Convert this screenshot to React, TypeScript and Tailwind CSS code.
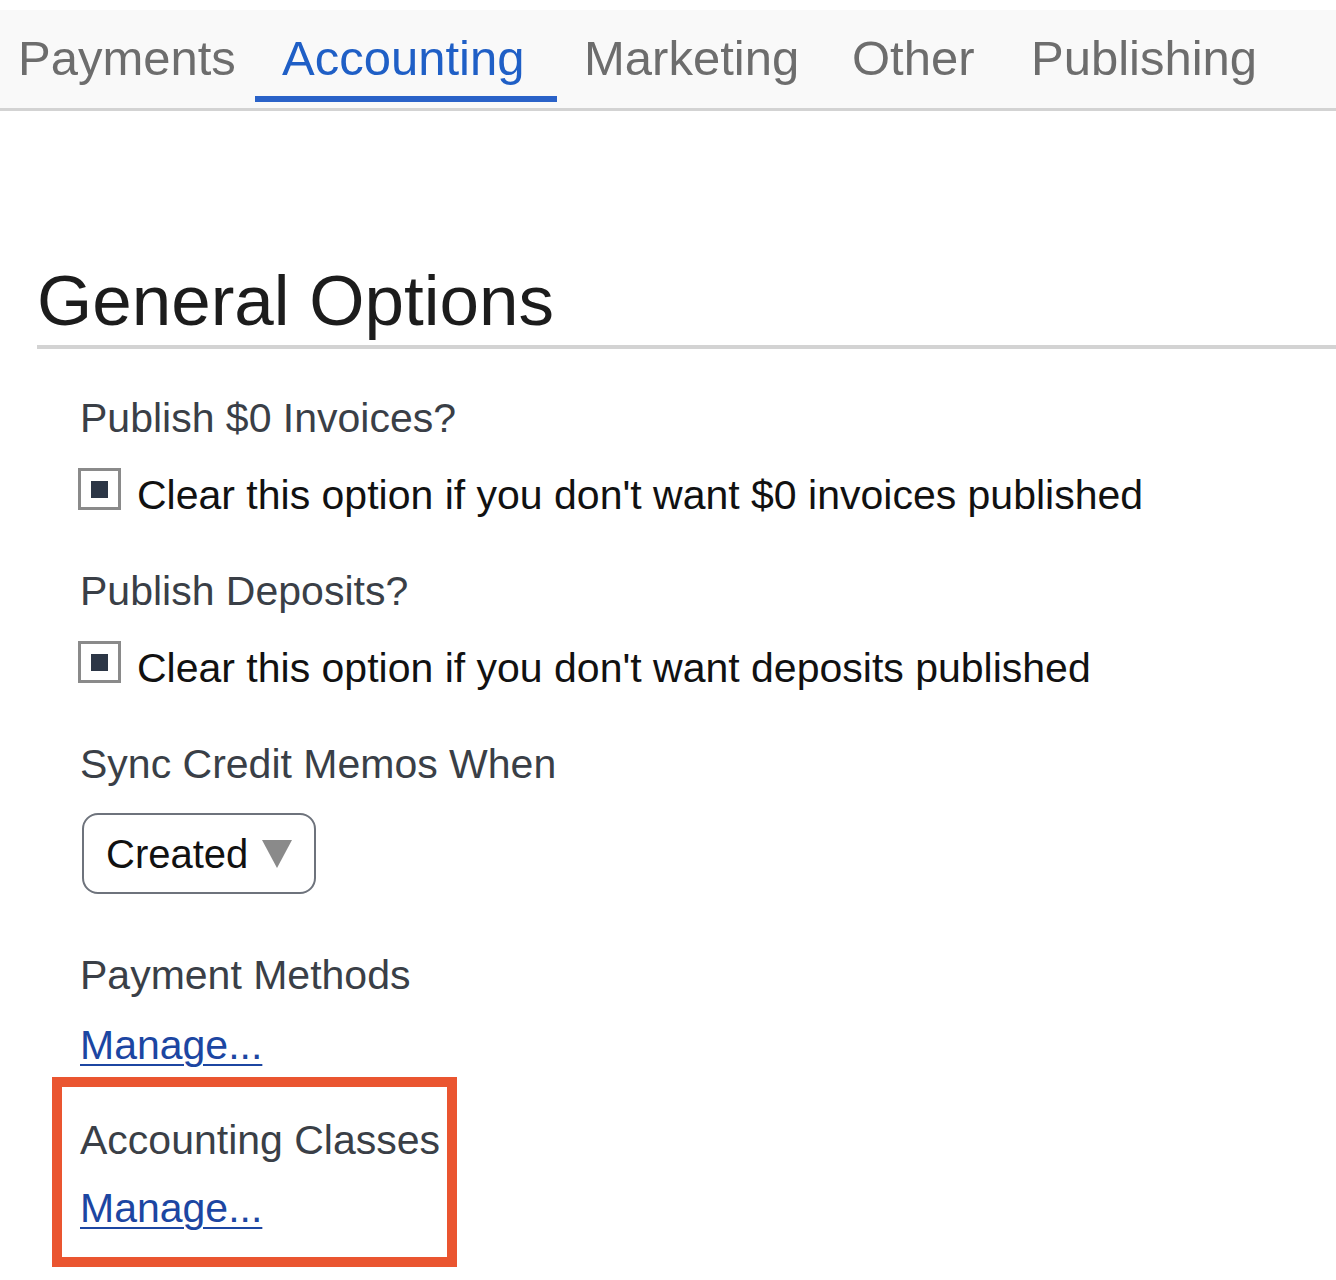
import { useState } from "react"

const tabs = [
    { name: "Payments", cls: "w-[255px] pl-[18px]" },
    { name: "Accounting", cls: "w-[302px] pl-[27px]" },
    { name: "Marketing", cls: "w-[268px] pl-[27px]" },
    { name: "Other", cls: "w-[179px] pl-[27px]" },
    { name: "Publishing", cls: "w-[260px] pl-[27px]" },
]

function Checkbox({ checked, onToggle }: { checked: boolean, onToggle: () => void }) {
    return (
        <button
            onClick={onToggle}
            className="w-[43px] h-[42px] shrink-0 border-[3px] border-[#8a8a8a] bg-white flex items-center justify-center"
        >
            {checked && <span className="block w-[17px] h-[17px] bg-[#2c3646]" />}
        </button>
    )
}

export default function App() {

    const [activeTab, setActiveTab] = useState<string>("Accounting")
    const [publishZero, setPublishZero] = useState<boolean>(true)
    const [publishDeposits, setPublishDeposits] = useState<boolean>(true)

    return (
        <div className="min-h-[1280px] bg-white pt-[10px] font-['Liberation_Sans',Arial,sans-serif]">
            <nav className="flex h-[101px] bg-[#f9f9f9] border-b-[3px] border-[#d3d3d3]">
                {tabs.map(tab => (
                    <button
                        key={tab.name}
                        onClick={() => setActiveTab(tab.name)}
                        className={`${tab.cls} shrink-0 h-[92px] text-left text-[49px] leading-[48px] ${
                            activeTab === tab.name
                                ? "text-[#1f5fc6]"
                                : "text-[#6d6d6d]"
                        }`}
                    >
                        <span className={`block h-full pt-[24px] ${activeTab === tab.name ? "-ml-[27px] pl-[27px] border-b-[6px] border-[#2a62c8]" : ""}`}>
                            {tab.name}
                        </span>
                    </button>
                ))}
            </nav>

            <div className="ml-[37px] mt-[154px] border-b-4 border-[#d3d3d3] pb-[9px]">
                <h1 className="text-[71px] leading-none text-[#1c1c1c]">General Options</h1>
            </div>

            <div className="pl-[80px] pt-[45px] pb-10 text-[41px] leading-[48px]">
                <div className="text-[#3a3f47]">Publish $0 Invoices?</div>
                <div className="flex items-start mt-[26px] -ml-[2px]">
                    <Checkbox checked={publishZero} onToggle={() => setPublishZero(!publishZero)} />
                    <span className="ml-[16px] mt-[3px] text-[#111]">
                        Clear this option if you don't want $0 invoices published
                    </span>
                </div>

                <div className="mt-[48px] text-[#3a3f47]">Publish Deposits?</div>
                <div className="flex items-start mt-[26px] -ml-[2px]">
                    <Checkbox checked={publishDeposits} onToggle={() => setPublishDeposits(!publishDeposits)} />
                    <span className="ml-[16px] mt-[3px] text-[#111]">
                        Clear this option if you don't want deposits published
                    </span>
                </div>

                <div className="mt-[48px] text-[#3a3f47]">Sync Credit Memos When</div>
                <div className="mt-[25px] ml-[2px] w-[234px] h-[81px] border-2 border-[#6e737c] rounded-[16px] flex items-center pl-[22px] pr-[22px]">
                    <span className="text-[40px] text-[#111]">Created</span>
                    <svg width="30" height="28" viewBox="0 0 30 28" className="ml-auto">
                        <polygon points="0,0 30,0 15,28" fill="#8a8a8a" />
                    </svg>
                </div>

                <div className="mt-[57px] text-[#3a3f47]">Payment Methods</div>
                <a href="#" className="block w-fit mt-[22px] text-[#1c46a2] underline decoration-2 underline-offset-[5px]">
                    Manage...
                </a>

                <div className="-ml-[28px] mt-[8px] w-[405px] border-[10px] border-[#ea5530] pl-[18px] pt-[29px] pb-[25px]">
                    <div className="text-[#3a3f47]">Accounting Classes</div>
                    <a href="#" className="block w-fit mt-[20px] text-[#1c46a2] underline decoration-2 underline-offset-[5px]">
                        Manage...
                    </a>
                </div>
            </div>
        </div>
    )
}
